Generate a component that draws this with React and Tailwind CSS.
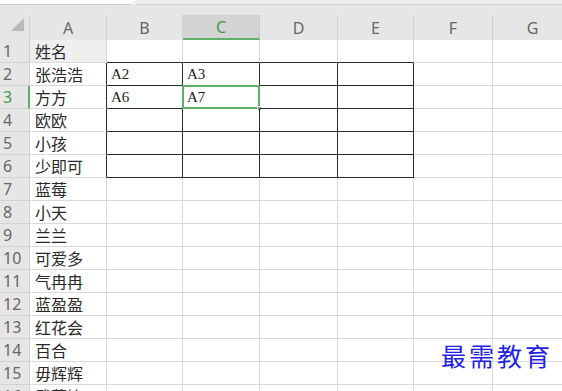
import React from "react";

const cols = [
  { key: "B", w: "w-[76px]" },
  { key: "C", w: "w-[77px]" },
  { key: "D", w: "w-[78px]" },
  { key: "E", w: "w-[76px]" },
  { key: "F", w: "w-[79px]" },
  { key: "G", w: "w-[80px]" },
];

const names = [
  "姓名",
  "张浩浩",
  "方方",
  "欧欧",
  "小孩",
  "少即可",
  "蓝莓",
  "小天",
  "兰兰",
  "可爱多",
  "气冉冉",
  "蓝盈盈",
  "红花会",
  "百合",
  "毋辉辉",
  "武菲锋",
];

const values = { "B2": "A2", "C2": "A3", "B3": "A6", "C3": "A7" };
const boxed = ["B", "C", "D", "E"];

const cjk = { fontFamily: '"Noto Sans CJK SC", "Noto Sans", sans-serif' };
const serif = { fontFamily: '"Liberation Serif", "Noto Sans CJK SC", serif' };
const sans = { fontFamily: '"Noto Sans", "Liberation Sans", sans-serif' };

// one spreadsheet cell in columns B..G
const Cell = ({ col, row }) => {
  const id = col.key + row;
  const inBox = boxed.includes(col.key);
  const right = inBox && row >= 2 && row <= 6 ? "border-r-[#2b2b2b]" : "border-r-[#dadada]";
  const bottom = inBox && row >= 1 && row <= 6 ? "border-b-[#2b2b2b]" : "border-b-[#dadada]";
  const selected = id === "C3";
  return (
    <div
      className={`relative ${col.w} shrink-0 h-full border-r border-b ${right} ${bottom} flex items-center pl-[4px] text-[15px] text-[#222]`}
      style={serif}
    >
      {values[id]}
      {selected && (
        <>
          <div className="absolute -left-[1px] -top-[1px] -right-[1px] -bottom-[1px] border-2 border-[#5fae6a]" />
          <div className="absolute -right-[3px] -bottom-[3px] w-[5px] h-[5px] bg-[#5fae6a] border border-white" />
        </>
      )}
    </div>
  );
};

export default function App() {
  return (
    <div className="relative w-[562px] h-[391px] overflow-hidden bg-white">
      {/* bottom edge of the formula bar */}
      <div className="flex h-[5px]">
        <div className="w-[135px] bg-white border-b border-[#cccccc] rounded-br-[5px]" />
        <div className="flex-1 bg-[#eeeeee] border-b border-[#d4d4d4]" />
      </div>

      {/* column headers */}
      <div className="flex h-[35px] bg-[#e6e6e6] items-end" style={sans}>
        <div className="w-[30px] shrink-0 h-[25px] relative border-r border-[#d0d0d0]">
          <svg className="absolute left-[11px] top-[3px]" width="14" height="14" viewBox="0 0 14 14">
            <polygon points="13,0 13,13 0,13" fill="#b9b9b9" />
          </svg>
        </div>
        <div className="w-[77px] shrink-0 h-[25px] flex items-center justify-center border-r border-[#d0d0d0] text-[16px] text-[#666]">
          A
        </div>
        {cols.map((c) =>
          c.key === "C" ? (
            <div
              key={c.key}
              className={`${c.w} shrink-0 h-[25px] flex items-center justify-center bg-[#d4d4d4] border-r border-[#c8c8c8] border-b-2 border-b-[#5fae6a] text-[16px] text-[#3f9a4b]`}
            >
              {c.key}
            </div>
          ) : (
            <div
              key={c.key}
              className={`${c.w} shrink-0 h-[25px] flex items-center justify-center border-r border-[#d0d0d0] text-[16px] text-[#666]`}
            >
              {c.key}
            </div>
          )
        )}
      </div>

      {/* rows */}
      {names.map((name, i) => {
        const row = i + 1;
        return (
          <div key={row} className="flex h-[23px]">
            <div
              className={`w-[30px] shrink-0 h-full bg-[#e6e6e6] border-b border-[#d2d2d2] flex items-center pl-[3px] text-[16px] ${
                row === 3 ? "text-[#3f9a4b] border-r-2 border-r-[#5fae6a]" : "text-[#666] border-r border-r-[#d0d0d0]"
              }`}
              style={sans}
            >
              {row}
            </div>
            <div
              className={`w-[77px] shrink-0 h-full border-b border-[#dadada] flex items-center pl-[5px] text-[16px] text-[#2a2a2a] ${
                row >= 2 && row <= 6 ? "border-r border-r-[#2b2b2b]" : "border-r border-r-[#dadada]"
              } ${row === 1 ? "bg-[#efefef]" : ""}`}
              style={cjk}
            >
              {name}
            </div>
            {cols.map((c) => (
              <Cell key={c.key} col={c} row={row} />
            ))}
          </div>
        );
      })}

      {/* watermark */}
      <div
        className="absolute left-[441px] top-[343px] text-[25px] leading-none tracking-[3px] text-[#1f1fe6]"
        style={cjk}
      >
        最需教育
      </div>
    </div>
  );
}
